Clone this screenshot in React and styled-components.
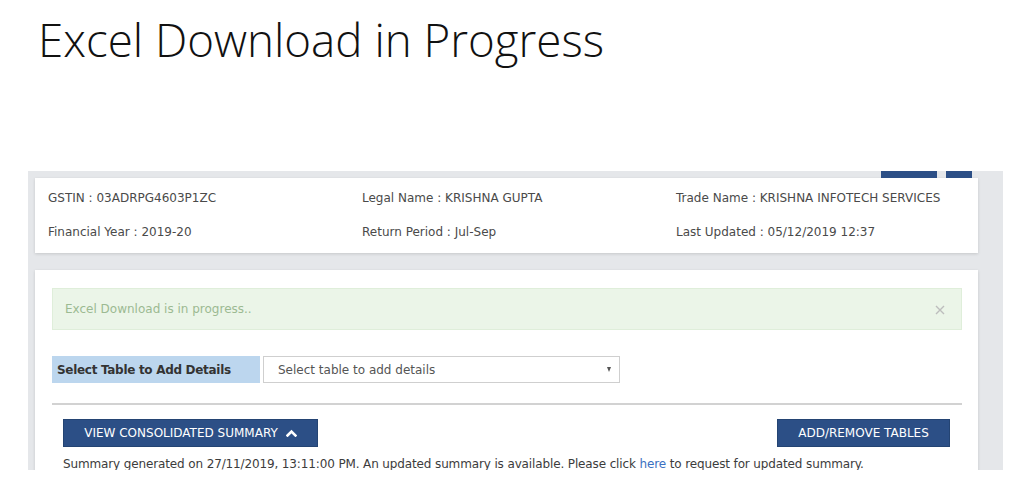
import React from 'react';
import styled, { createGlobalStyle } from 'styled-components';

const GlobalStyle = createGlobalStyle`
  html, body {
    margin: 0;
    padding: 0;
    background: #ffffff;
  }
  * {
    box-sizing: border-box;
  }
`;

const Slide = styled.main`
  width: 1024px;
  height: 498px;
  overflow: hidden;
  background: #ffffff;
  padding-top: 12px;
`;

const Title = styled.h1`
  margin: 0 0 0 38px;
  font-family: 'Open Sans', 'Liberation Sans', sans-serif;
  font-weight: 300;
  font-size: 45.7px;
  line-height: 54px;
  color: #111111;
`;

const Shot = styled.section`
  margin: 105px 0 0 28px;
  width: 975px;
  height: 299px;
  overflow: hidden;
  background: #e5e7ea;
  padding: 0 25px 0 7px;
  font-family: 'DejaVu Sans', Verdana, sans-serif;
  font-size: 12px;
  color: #555555;
`;

const TopActions = styled.div`
  display: flex;
  justify-content: flex-end;
  gap: 9px;
  height: 7px;
  padding-right: 6px;
`;

const TopButton = styled.span`
  display: block;
  width: ${(p) => p.$w}px;
  height: 7px;
  background: #2c4f86;
`;

const Card = styled.div`
  background: #ffffff;
  box-shadow: 0 1px 3px rgba(0, 0, 0, 0.14);
`;

const InfoCard = styled(Card)`
  display: grid;
  grid-template-columns: repeat(3, 314px);
  row-gap: 18px;
  padding: 12px 0 13px 13px;
`;

const Info = styled.div`
  line-height: 16px;
  white-space: nowrap;
  color: #4a4a4a;
`;

const MainCard = styled(Card)`
  margin-top: 17px;
  padding: 18px 16px 0 17px;
  min-height: 240px;
`;

const Alert = styled.div`
  display: flex;
  align-items: center;
  justify-content: space-between;
  height: 42px;
  padding: 0 16px 0 12px;
  background: #ebf5e8;
  border: 1px solid #dfeeda;
  color: #9cba92;
  line-height: 16px;
`;

const Close = styled.svg`
  width: 10px;
  height: 10px;
  margin-top: 2px;
`;

const SelectRow = styled.div`
  display: flex;
  gap: 3px;
  margin-top: 26px;
  height: 27px;
`;

const SelectLabel = styled.div`
  width: 208px;
  display: flex;
  align-items: center;
  padding-left: 5px;
  background: #bcd6ee;
  font-weight: bold;
  letter-spacing: -0.3px;
  color: #333333;
`;

const SelectBox = styled.div`
  width: 357px;
  display: flex;
  align-items: center;
  justify-content: space-between;
  padding: 0 8px 0 14px;
  border: 1px solid #cfcfcf;
  background: #ffffff;
  color: #555555;
`;

const Caret = styled.span`
  width: 0;
  height: 0;
  border-left: 2.5px solid transparent;
  border-right: 2.5px solid transparent;
  border-top: 5px solid #555555;
`;

const Divider = styled.hr`
  margin: 20px 0 0;
  border: 0;
  height: 2px;
  background: #d2d2d2;
`;

const ButtonRow = styled.div`
  display: flex;
  justify-content: space-between;
  margin-top: 14px;
  padding: 0 12px 0 11px;
`;

const Button = styled.button`
  display: flex;
  align-items: center;
  justify-content: center;
  gap: 8px;
  width: ${(p) => p.$w}px;
  height: 28px;
  padding: 0;
  border: 1px solid #244473;
  background: #2c4f86;
  color: #ffffff;
  font-family: 'DejaVu Sans', Verdana, sans-serif;
  font-size: 12px;
  text-transform: uppercase;
  cursor: pointer;
`;

const Summary = styled.p`
  margin: 9px 0 0 11px;
  line-height: 16px;
  letter-spacing: -0.13px;
  color: #3c3c3c;
  white-space: nowrap;
  a {
    color: #3b70c1;
    text-decoration: none;
  }
`;

const ChevronUp = () => (
  <svg width="11" height="8" viewBox="0 0 11 8">
    <polyline
      points="1.5,6.5 5.5,2.5 9.5,6.5"
      fill="none"
      stroke="#ffffff"
      strokeWidth="2.6"
      strokeLinecap="square"
    />
  </svg>
);

const info = [
  'GSTIN : 03ADRPG4603P1ZC',
  'Legal Name : KRISHNA GUPTA',
  'Trade Name : KRISHNA INFOTECH SERVICES',
  'Financial Year : 2019-20',
  'Return Period : Jul-Sep',
  'Last Updated : 05/12/2019 12:37',
];

export default function App() {
  return (
    <>
      <GlobalStyle />
      <Slide>
        <Title>Excel Download in Progress</Title>
        <Shot>
          <TopActions>
            <TopButton $w={56} />
            <TopButton $w={26} />
          </TopActions>
          <InfoCard>
            {info.map((t) => (
              <Info key={t}>{t}</Info>
            ))}
          </InfoCard>
          <MainCard>
            <Alert>
              <span>Excel Download is in progress..</span>
              <Close viewBox="0 0 10 10">
                <path d="M1 1 L9 9 M9 1 L1 9" stroke="#bdbdbd" strokeWidth="1.4" />
              </Close>
            </Alert>
            <SelectRow>
              <SelectLabel>Select Table to Add Details</SelectLabel>
              <SelectBox>
                <span>Select table to add details</span>
                <Caret />
              </SelectBox>
            </SelectRow>
            <Divider />
            <ButtonRow>
              <Button $w={255}>
                View Consolidated Summary <ChevronUp />
              </Button>
              <Button $w={173}>Add/Remove Tables</Button>
            </ButtonRow>
            <Summary>
              Summary generated on 27/11/2019, 13:11:00 PM. An updated summary is
              available. Please click <a href="#">here</a> to request for updated
              summary.
            </Summary>
          </MainCard>
        </Shot>
      </Slide>
    </>
  );
}
